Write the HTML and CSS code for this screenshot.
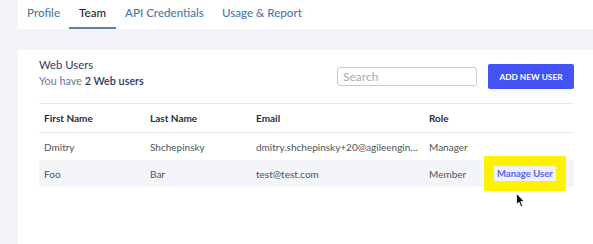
FILE: index.html
```html
<!DOCTYPE html>
<html>
<head>
<meta charset="utf-8">
<title>Team</title>
<link rel="stylesheet" href="styles.css">
</head>
<body>

<nav class="tabs">
  <a class="tab">Profile</a>
  <a class="tab active">Team</a>
  <a class="tab">API Credentials</a>
  <a class="tab">Usage &amp; Report</a>
</nav>

<section class="card">
  <div class="cardHead">
    <div class="heading">
      <div class="title">Web Users</div>
      <div class="subtitle">You have <b>2 Web users</b></div>
    </div>
    <div class="actions">
      <input class="search" type="text" placeholder="Search">
      <button class="addButton">ADD NEW USER</button>
    </div>
  </div>

  <table class="users">
    <thead>
      <tr>
        <th class="colFirst">First Name</th>
        <th class="colLast">Last Name</th>
        <th class="colEmail">Email</th>
        <th class="colRole">Role</th>
        <th></th>
      </tr>
    </thead>
    <tbody>
      <tr>
        <td>Dmitry</td>
        <td>Shchepinsky</td>
        <td><div class="email">dmitry.shchepinsky+20@agileengine.io</div></td>
        <td>Manager</td>
        <td></td>
      </tr>
      <tr class="hover">
        <td>Foo</td>
        <td>Bar</td>
        <td><div class="email">test@test.com</div></td>
        <td>Member</td>
        <td class="actionCell"><span class="manage">Manage User</span></td>
      </tr>
    </tbody>
  </table>
</section>

<!-- mouse pointer from the recording -->
<svg class="pointer" width="10" height="15" viewBox="0 0 10 15">
  <path d="M0.5 0.5 L0.5 11.5 L3 9.2 L5 13.8 L6.8 13 L4.8 8.6 L8.3 8.6 Z" fill="#111" stroke="#fff" stroke-width="0.8"/>
</svg>

</body>
</html>
```

FILE: styles.css
```css
body {
  margin: 0;
  background-color: #f2f4f8;
  font-family: Lato, "Open Sans", sans-serif;
  height: 244px;
  overflow: hidden;
  position: relative;
}
.tabs {
  margin-left: 18px;
  height: 29px;
  background-color: #fff;
  display: flex;
  align-items: stretch;
}
.tab {
  padding: 0 9px 5px 9px;
  display: flex;
  align-items: center;
  font-size: 11.6px;
  font-weight: 500;
  color: #4b79a8;
  box-sizing: border-box;
}
.tab.active {
  color: #1d2330;
  border-bottom: 2px solid #5b82a8;
  padding: 0 10px 3px 10px;
}
.card {
  margin: 21px 0 0 18px;
  background-color: #fff;
  padding: 8px 19px 0 21px;
  height: 194px;
  box-sizing: border-box;
}
.cardHead {
  display: flex;
  justify-content: space-between;
  align-items: center;
  height: 37px;
}
.heading {
  align-self: flex-start;
}
.title {
  font-size: 11.3px;
  line-height: 14px;
  color: #2d3a66;
}
.subtitle {
  font-size: 10.8px;
  line-height: 14px;
  color: #6f7690;
  margin-top: 2px;
}
.subtitle b {
  color: #2d3a66;
  font-weight: 600;
}
.actions {
  display: flex;
  align-items: center;
  gap: 11px;
}
.search {
  width: 140px;
  height: 19px;
  box-sizing: border-box;
  border: 1px solid #c9ccd2;
  border-radius: 3px;
  font-family: inherit;
  font-size: 12px;
  padding: 0 5px;
}
.search::placeholder {
  color: #a8abb3;
}
.addButton {
  width: 86px;
  height: 25px;
  border: none;
  border-radius: 2px;
  background-color: #4353f6;
  color: #fff;
  font-family: inherit;
  font-size: 8.3px;
  font-weight: 700;
  padding: 0;
}
.users {
  margin-top: 8px;
  width: 535px;
  border-collapse: collapse;
  font-size: 10px;
  color: #50535b;
  table-layout: fixed;
}
.users th {
  text-align: left;
  font-weight: 700;
  color: #2b2e36;
  height: 28px;
  padding: 0 5px;
  border-top: 1px solid #e6e8ec;
  border-bottom: 1px solid #e6e8ec;
}
.users td {
  padding: 0 5px;
  height: 27px;
}
.colFirst { width: 96px; }
.colLast { width: 96px; }
.colEmail { width: 163px; }
.colRole { width: 55px; }
.hover td {
  background-color: #f4f5f8;
}
.email {
  overflow: hidden;
  white-space: nowrap;
  text-overflow: ellipsis;
  width: 163px;
}
.manage {
  display: inline-block;
  padding: 2px 3px;
  background-color: #eef1fb;
  color: #5a64e6;
  font-size: 9.5px;
  font-weight: 700;
  box-shadow: 0 0 0 10px #fff200;
}
.pointer {
  position: absolute;
  left: 516px;
  top: 193px;
}
```
